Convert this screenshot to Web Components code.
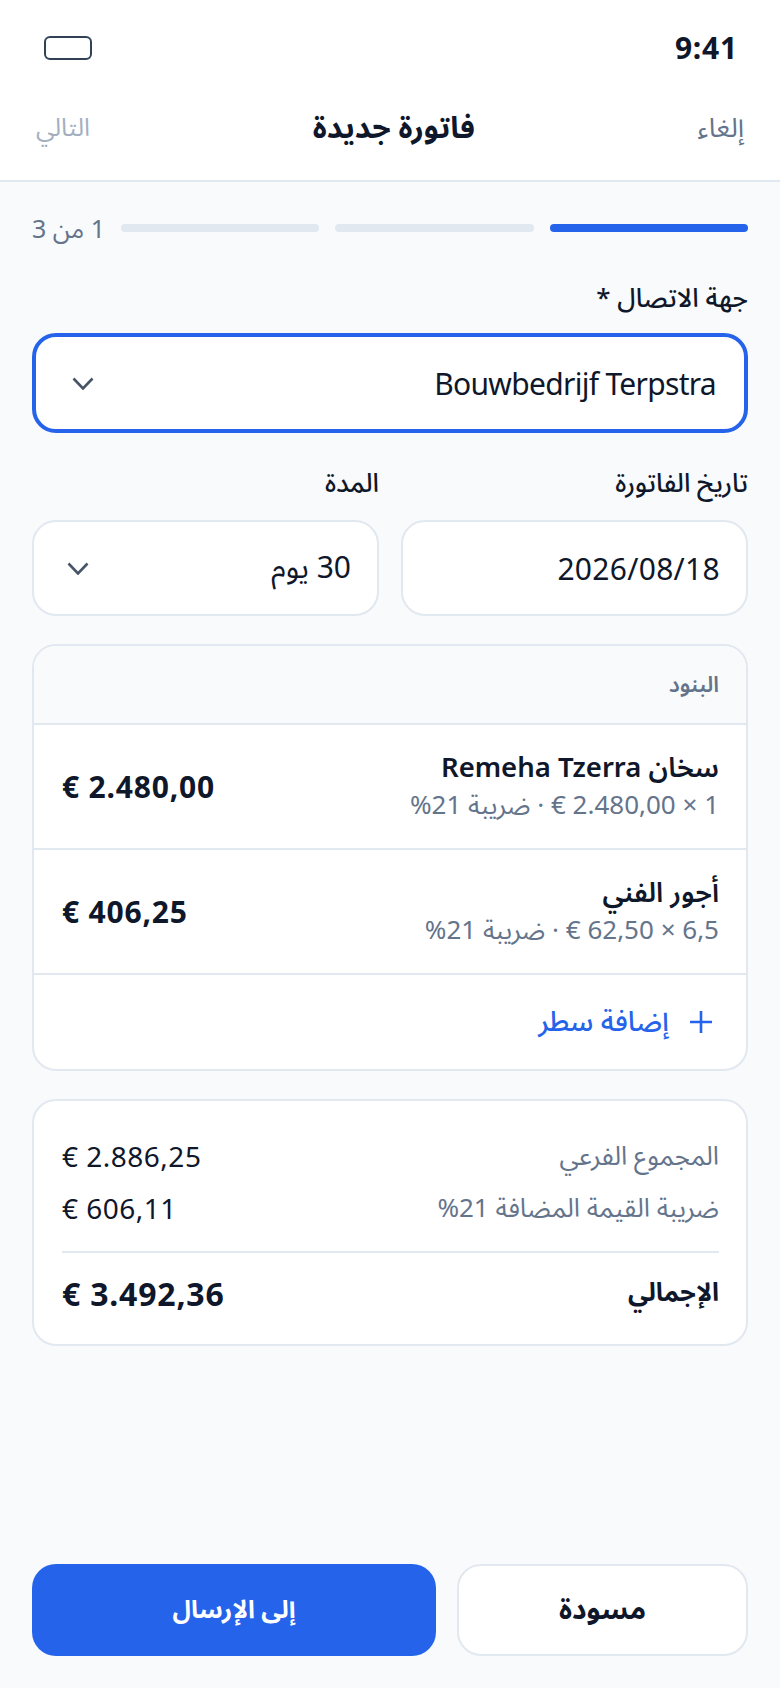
<!DOCTYPE html>
<html lang="ar" dir="rtl">
<head>
<meta charset="utf-8">
<title>فاتورة جديدة</title>
<style>
html,body{margin:0;padding:0}
body{width:780px;height:1688px;background:#f8fafc;font-family:"Noto Sans","Noto Sans Arabic","DejaVu Sans",sans-serif;color:#0f172a;display:flex;flex-direction:column;overflow:hidden}
x-main{flex:1}
</style>
</head>
<body>
<x-status time="9:41"></x-status>
<x-nav cancel="إلغاء" next="التالي">فاتورة جديدة</x-nav>
<x-main>
  <x-progress label="1 من 3"></x-progress>
  <x-field label="جهة الاتصال *" gap="18" top="37"><x-box focused chevron ls="-0.7px">Bouwbedrijf Terpstra</x-box></x-field>
  <x-row>
    <x-field label="تاريخ الفاتورة" gap="20" top="-3"><x-box ls="0.3px">2026/08/18</x-box></x-field>
    <x-field label="المدة" gap="20" top="-3"><x-box chevron>30 يوم</x-box></x-field>
  </x-row>
  <x-lines title="البنود">
    <x-line name="سخان Remeha Tzerra" meta="1 × 2.480,00 € · ضريبة 21%" amount="€ 2.480,00"></x-line>
    <x-line name="أجور الفني" meta="6,5 × 62,50 € · ضريبة 21%" amount="€ 406,25"></x-line>
    <x-add>إضافة سطر</x-add>
  </x-lines>
  <x-totals>
    <x-total label="المجموع الفرعي" value="€ 2.886,25"></x-total>
    <x-total label="ضريبة القيمة المضافة 21%" value="€ 606,11"></x-total>
    <x-total grand label="الإجمالي" value="€ 3.492,36"></x-total>
  </x-totals>
</x-main>
<x-actions primary="إلى الإرسال" secondary="مسودة"></x-actions>
<script>
const define=(name,html)=>customElements.define(name,class extends HTMLElement{
  connectedCallback(){
    if(this.shadowRoot)return;
    const s=this.attachShadow({mode:'open'});
    s.innerHTML=html(this);
  }
});
define('x-status',e=>`<style>:host{display:flex;align-items:center;justify-content:space-between;height:88px;background:#fff;padding:8px 42px 0 44px;box-sizing:border-box}
.t{font-size:30px;font-weight:700;color:#0f172a;line-height:1;letter-spacing:.8px}
.b{width:48px;height:24px;box-sizing:border-box;border:2px solid #334155;border-radius:6px}</style>
<span class="t">${e.getAttribute('time')}</span><span class="b"></span>`);
define('x-nav',e=>`<style>:host{display:flex;align-items:center;justify-content:space-between;height:94px;background:#fff;padding:0 36px 12px;box-sizing:border-box;border-bottom:2px solid #e2e8f0}
.c{font-size:27px;color:#64748b}.n{font-size:25px;color:#a3afbf}
.m{font-size:30px;font-weight:700;color:#0f172a}</style>
<span class="c">${e.getAttribute('cancel')}</span><span class="m"><slot></slot></span><span class="n">${e.getAttribute('next')}</span>`);
define('x-main',e=>`<style>:host{display:block;padding:32px 32px 0}</style><slot></slot>`);
define('x-progress',e=>`<style>:host{display:flex;align-items:center;gap:16px;height:28px}
.s{flex:1;height:8px;border-radius:4px;background:#e2e8f0}.a{background:#2563eb}
.l{font-size:25px;color:#64748b;line-height:28px;white-space:nowrap}</style>
<span class="s a"></span><span class="s"></span><span class="s"></span><span class="l">${e.getAttribute('label')}</span>`);
define('x-field',e=>`<style>:host{display:block;margin-top:${e.getAttribute('top')}px}
.l{display:block;font-size:26px;font-weight:500;line-height:36px;color:#0f172a;margin-bottom:${e.getAttribute('gap')}px}</style>
<span class="l">${e.getAttribute('label')}</span><slot></slot>`);
define('x-row',e=>`<style>:host{display:grid;grid-template-columns:1fr 1fr;gap:22px;margin-top:34px}</style><slot></slot>`);
define('x-box',e=>{const f=e.hasAttribute('focused');return `<style>:host{display:flex;align-items:center;justify-content:space-between;box-sizing:border-box;height:${f?100:96}px;background:#fff;border:${f?'4px solid #2563eb':'2px solid #e2e8f0'};border-radius:24px;padding:0 ${f?28:26}px 0 ${f?36:33}px;font-size:30px;color:#0f172a}
span{letter-spacing:${e.getAttribute('ls')||'normal'}}
svg{display:block}</style><span><slot></slot></span>${e.hasAttribute('chevron')?`<svg width="22" height="13" viewBox="0 0 22 13" fill="none" stroke="#475569" stroke-width="2.6"><path d="M1.5 1.5 11 11.5 20.5 1.5"/></svg>`:''}`});
define('x-lines',e=>`<style>:host{display:block;margin-top:28px;background:#fff;border:2px solid #e2e8f0;border-radius:24px;overflow:hidden}
.h{height:77px;box-sizing:border-box;background:#f8fafc;padding:0 27px;display:flex;align-items:center;font-size:22px;font-weight:600;color:#64748b}</style>
<div class="h">${e.getAttribute('title')}</div><slot></slot>`);
define('x-line',e=>`<style>:host{display:flex;align-items:center;justify-content:space-between;height:125px;box-sizing:border-box;border-top:2px solid #e2e8f0;padding:0 27px 0 28px}
.t{padding-bottom:3px}
.n{font-size:27.5px;font-weight:600;color:#0f172a;line-height:37px}.m{font-size:26px;color:#64748b;line-height:38px}
.a{font-size:30px;font-weight:700;color:#0f172a;white-space:nowrap;letter-spacing:.8px}</style>
<div class="t"><div class="n">${e.getAttribute('name')}</div><div class="m">${e.getAttribute('meta')}</div></div><div class="a" dir="ltr">${e.getAttribute('amount')}</div>`);
define('x-add',e=>`<style>:host{display:flex;align-items:center;gap:20px;height:96px;box-sizing:border-box;border-top:2px solid #e2e8f0;padding:0 33px;font-size:28px;font-weight:500;color:#2563eb}
svg{display:block}</style><svg width="24" height="24" viewBox="0 0 24 24" fill="none" stroke="#2563eb" stroke-width="2.6"><path d="M12 1v22M1 12h22"/></svg><span><slot></slot></span>`);
define('x-totals',e=>`<style>:host{display:block;margin-top:28px;background:#fff;border:2px solid #e2e8f0;border-radius:24px;padding:29px 27px 0 28px;box-sizing:border-box;height:247px}</style><slot></slot>`);
define('x-total',e=>{const g=e.hasAttribute('grand');return `<style>:host{display:flex;align-items:center;justify-content:space-between;height:${g?'82px':'52px'};${g?'border-top:2px solid #e2e8f0;margin-top:17px;box-sizing:border-box;':''}}
.l{font-size:${g?25.5:26}px;font-weight:${g?700:400};color:${g?'#0f172a':'#64748b'}}
.v{font-size:${g?32:28}px;font-weight:${g?700:400};color:#0f172a;white-space:nowrap;letter-spacing:${g?.8:.5}px}</style>
<span class="l">${e.getAttribute('label')}</span><span class="v" dir="ltr">${e.getAttribute('value')}</span>`});
define('x-actions',e=>`<style>:host{display:flex;gap:21px;padding:0 32px 32px}
.b{height:92px;box-sizing:border-box;border-radius:24px;display:flex;align-items:center;justify-content:center;font-size:28px;font-weight:700}
.s{flex:none;width:291px;background:#fff;border:2px solid #e2e8f0;color:#0f172a}
.p{flex:1;background:#2563eb;color:#fff;font-size:25px;font-weight:700}</style>
<div class="b s">${e.getAttribute('secondary')}</div><div class="b p">${e.getAttribute('primary')}</div>`);
</script>
</body>
</html>
